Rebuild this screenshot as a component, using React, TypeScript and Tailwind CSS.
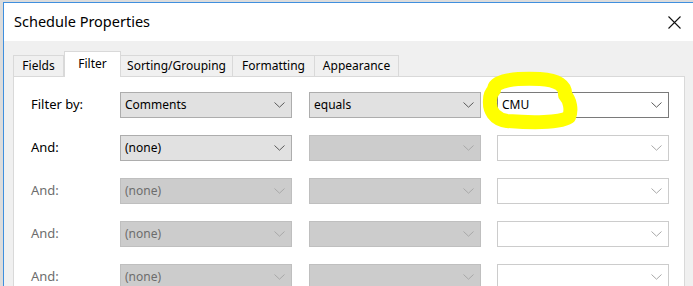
import React from 'react';

type ComboProps = {
  text?: string;
  variant: 'enabled' | 'disabled' | 'white' | 'whiteDisabled';
};

const Chevron: React.FC<{ color: string }> = ({ color }) => (
  <svg width="11" height="6" viewBox="0 0 11 6" className="shrink-0">
    <path d="M0.5 0.5 L5.5 5.2 L10.5 0.5" fill="none" stroke={color} strokeWidth="1" />
  </svg>
);

const Combo: React.FC<ComboProps> = ({ text, variant }) => {
  const styles = {
    enabled: 'bg-[#e1e1e1] border-[#adadad] text-[#000]',
    disabled: 'bg-[#cccccc] border-[#bfbfbf] text-[#6d6d6d]',
    white: 'bg-white border-[#7a7a7a] text-[#000]',
    whiteDisabled: 'bg-white border-[#cccccc] text-[#6d6d6d]',
  }[variant];
  const chevron = variant === 'enabled' || variant === 'white' ? '#5a5a5a' : '#a8a8a8';
  return (
    <div className={`flex h-[26px] items-center justify-between border pl-[4px] pr-[6px] ${styles}`}>
      <span className="text-[12px] leading-none">{text}</span>
      <Chevron color={chevron} />
    </div>
  );
};

const rows: { label: string; active: boolean; first: string; second?: string; third?: string }[] = [
  { label: 'Filter by:', active: true, first: 'Comments', second: 'equals', third: 'CMU' },
  { label: 'And:', active: true, first: '(none)' },
  { label: 'And:', active: false, first: '(none)' },
  { label: 'And:', active: false, first: '(none)' },
  { label: 'And:', active: false, first: '(none)' },
];

const tabs = [
  { name: 'Fields', w: 'w-[51px]' },
  { name: 'Filter', w: 'w-[57px]' },
  { name: 'Sorting/Grouping', w: 'w-[112px]' },
  { name: 'Formatting', w: 'w-[82px]' },
  { name: 'Appearance', w: 'w-[84px]' },
];

export default function App() {
  return (
    <div
      className="relative h-[286px] w-[693px] overflow-hidden bg-[#dcdcdc]"
      style={{ fontFamily: '"Noto Sans", "Open Sans", sans-serif' }}
    >
      <div className="ml-[3px] mt-[2px] h-[284px] border-l border-t border-[#3f8fde] bg-[#f0f0f0]">
        {/* title bar */}
        <div className="flex h-[38px] items-center justify-between bg-white pl-[10px] pr-[12px]">
          <span className="text-[14.5px] text-black">Schedule Properties</span>
          <svg width="13" height="13" viewBox="0 0 13 13">
            <path d="M0.5 0.5 L12.5 12.5 M12.5 0.5 L0.5 12.5" stroke="#111" strokeWidth="1.1" />
          </svg>
        </div>

        <div className="pl-[9px] pr-[8px] pt-[10px]">
          {/* tabs */}
          <div className="flex h-[25px] items-end">
            {tabs.map((t) => {
              const selected = t.name === 'Filter';
              return (
                <div
                  key={t.name}
                  className={
                    selected
                      ? `relative z-10 -mb-px flex h-[26px] items-center justify-center border border-b-0 border-[#d9d9d9] bg-white pb-[2px] text-[12px] text-black ${t.w}`
                      : `flex h-[21px] items-center justify-center border border-b-0 border-l-0 border-[#d9d9d9] bg-[#f0f0f0] text-[12px] text-black first:border-l ${t.w}`
                  }
                >
                  {t.name}
                </div>
              );
            })}
          </div>

          {/* panel */}
          <div className="h-[240px] border border-[#d9d9d9] bg-white pl-[17px] pr-[14px] pt-[15px]">
            <div className="flex flex-col gap-[17px]">
              {rows.map((r, i) => (
                <div key={i} className="flex items-center">
                  <div className={`w-[89px] text-[13px] ${r.active ? 'text-black' : 'text-[#6d6d6d]'}`}>{r.label}</div>
                  <div className="w-[172px]">
                    <Combo text={r.first} variant={r.active ? 'enabled' : 'disabled'} />
                  </div>
                  <div className="ml-[17px] w-[172px]">
                    <Combo text={r.second} variant={i === 0 ? 'enabled' : 'disabled'} />
                  </div>
                  <div className="ml-[16px] w-[172px]">
                    <Combo text={r.third} variant={i === 0 ? 'white' : 'whiteDisabled'} />
                  </div>
                </div>
              ))}
            </div>
          </div>
        </div>
      </div>

      {/* hand-drawn highlight */}
      <svg className="pointer-events-none absolute left-0 top-0" width="693" height="286">
        <path
          d="M494 90 C494 80 516 78 540 79 C558 80 566 86 565 95 C570 100 572 110 569 117 C560 123 532 123 507 121 C494 119 489 110 490 100 C490 95 492 92 494 90"
          fill="none"
          stroke="#ffff00"
          strokeWidth="14"
          strokeLinecap="round"
          strokeLinejoin="round"
        />
      </svg>
    </div>
  );
}
